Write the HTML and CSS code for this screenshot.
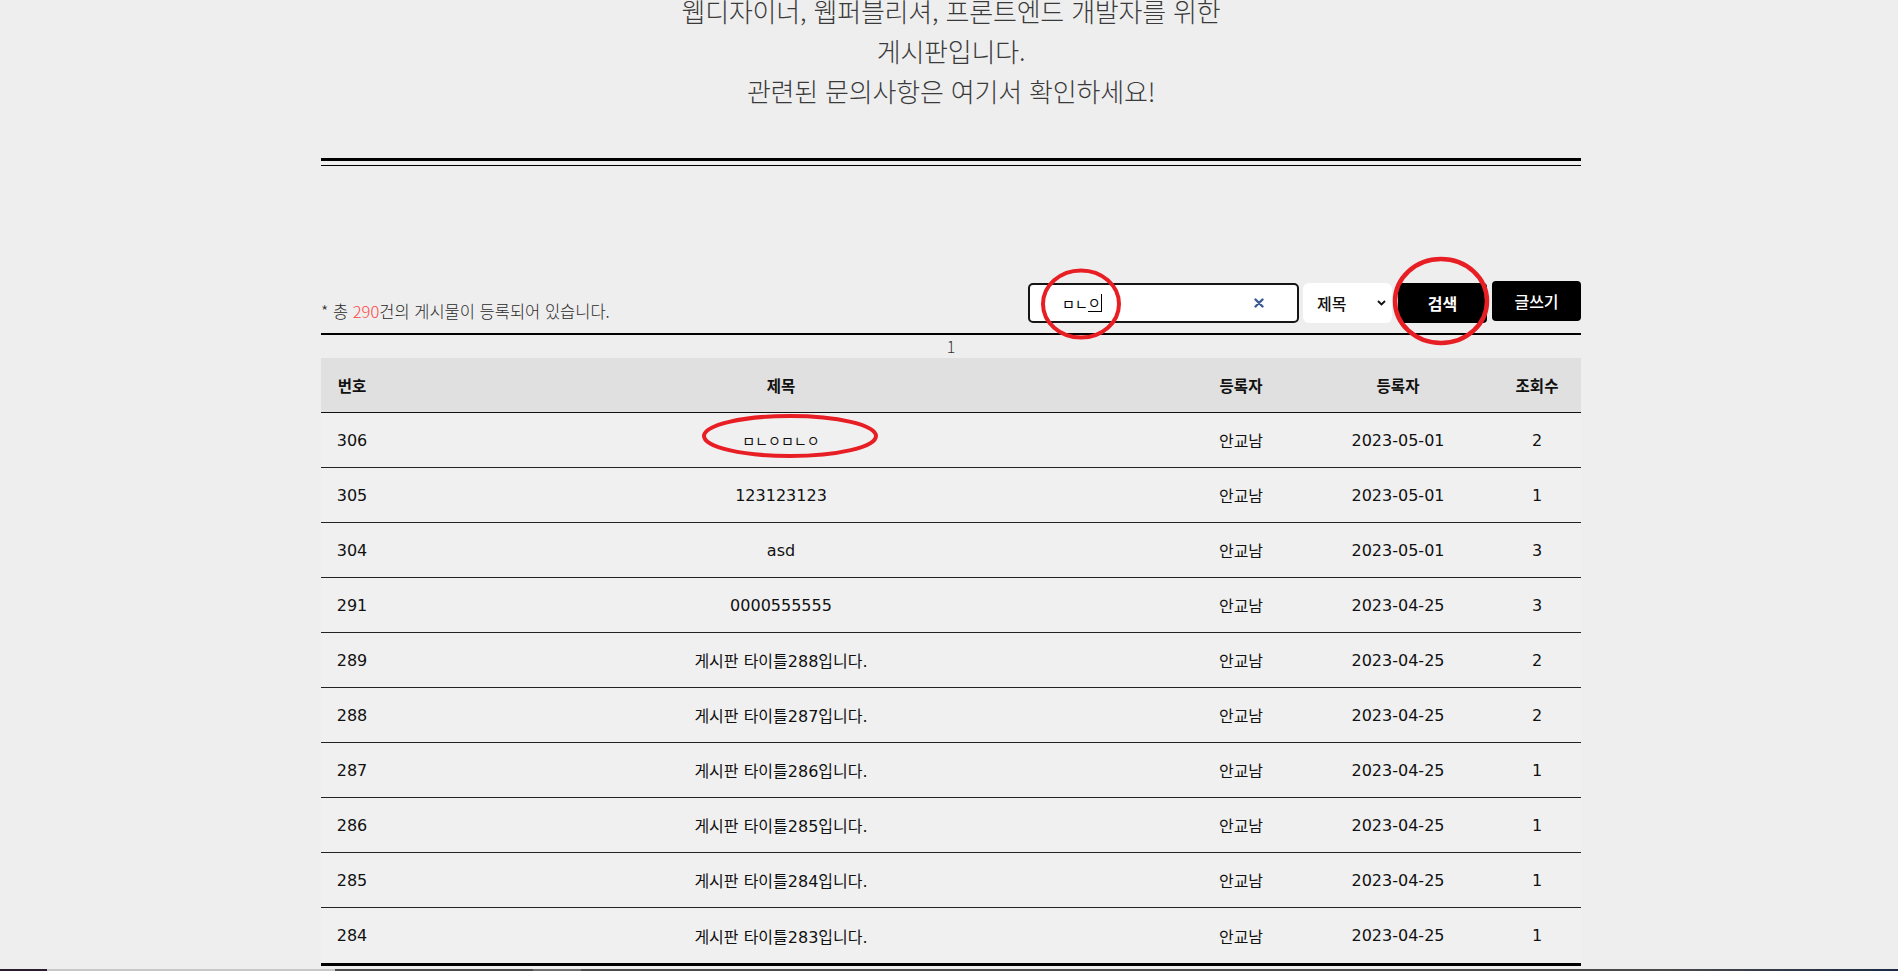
FILE: index.html
```html
<!DOCTYPE html>
<html lang="ko">
<head>
<meta charset="utf-8">
<title>게시판</title>
<link rel="stylesheet" href="styles.css">
</head>
<body>
<div class="page">
  <div class="intro">
    <p>웹디자이너, 웹퍼블리셔, 프론트엔드 개발자를 위한</p>
    <p>게시판입니다.</p>
    <p>관련된 문의사항은 여기서 확인하세요!</p>
  </div>

  <div class="board">
    <div class="rule"></div>

    <div class="toolbar">
      <p class="count">* 총 <span class="num">290</span>건의 게시물이 등록되어 있습니다.</p>
      <div class="controls">
        <div class="search">
          <span class="query">ㅁㄴ<span class="composing">ㅇ</span><span class="caret"></span></span>
          <svg class="clear" width="10" height="10" viewBox="0 0 10 10"><path d="M1.5 1.5 L8.5 8.5 M8.5 1.5 L1.5 8.5" stroke="#3c5b93" stroke-width="2.4" stroke-linecap="round"/></svg>
        </div>
        <div class="select">
          <span>제목</span>
          <svg width="9" height="6" viewBox="0 0 9 6"><path d="M1 1 L4.5 4.5 L8 1" fill="none" stroke="#111" stroke-width="1.8"/></svg>
        </div>
        <button class="btn btn-search">검색</button>
        <button class="btn btn-write">글쓰기</button>
      </div>
    </div>

    <div class="pager">1</div>

    <table class="list">
      <colgroup>
        <col class="c-no"><col class="c-title"><col class="c-writer"><col class="c-date"><col class="c-view">
      </colgroup>
      <thead>
        <tr><th>번호</th><th>제목</th><th>등록자</th><th>등록자</th><th>조회수</th></tr>
      </thead>
      <tbody>
        <tr><td>306</td><td class="jamo">ㅁㄴㅇㅁㄴㅇ</td><td>안교남</td><td>2023-05-01</td><td>2</td></tr>
        <tr><td>305</td><td>123123123</td><td>안교남</td><td>2023-05-01</td><td>1</td></tr>
        <tr><td>304</td><td>asd</td><td>안교남</td><td>2023-05-01</td><td>3</td></tr>
        <tr><td>291</td><td>0000555555</td><td>안교남</td><td>2023-04-25</td><td>3</td></tr>
        <tr><td>289</td><td>게시판 타이틀288입니다.</td><td>안교남</td><td>2023-04-25</td><td>2</td></tr>
        <tr><td>288</td><td>게시판 타이틀287입니다.</td><td>안교남</td><td>2023-04-25</td><td>2</td></tr>
        <tr><td>287</td><td>게시판 타이틀286입니다.</td><td>안교남</td><td>2023-04-25</td><td>1</td></tr>
        <tr><td>286</td><td>게시판 타이틀285입니다.</td><td>안교남</td><td>2023-04-25</td><td>1</td></tr>
        <tr><td>285</td><td>게시판 타이틀284입니다.</td><td>안교남</td><td>2023-04-25</td><td>1</td></tr>
        <tr class="last"><td>284</td><td>게시판 타이틀283입니다.</td><td>안교남</td><td>2023-04-25</td><td>1</td></tr>
      </tbody>
    </table>
  </div>
</div>

<svg class="annot" width="1898" height="971" viewBox="0 0 1898 971">
  <ellipse cx="1081" cy="304" rx="38" ry="33.5" fill="none" stroke="#e81e25" stroke-width="4"/>
  <ellipse cx="1441" cy="301" rx="46" ry="42" fill="none" stroke="#e81e25" stroke-width="4.5"/>
  <ellipse cx="790" cy="436" rx="86" ry="20" fill="none" stroke="#e81e25" stroke-width="4"/>
</svg>

<div class="taskbar"></div>
</body>
</html>
```

FILE: styles.css
```css
html, body {
  margin: 0;
  padding: 0;
  background: #eeeeee;
  overflow: hidden;
}

body {
  font-family: "Noto Sans CJK KR", "Noto Sans", sans-serif;
  color: #111;
}

.page {
  padding-left: 4px;
}

.intro {
  margin-top: -9px;
  text-align: center;
  font-size: 26px;
  font-weight: 300;
  line-height: 40px;
  color: #3a3a3a;
  letter-spacing: -0.2px;
}

.intro p {
  margin: 0;
}

.board {
  width: 1260px;
  margin: 47px auto 0;
}

.rule {
  height: 4px;
  border-top: 3px solid #000;
  border-bottom: 1px solid #000;
}

.toolbar {
  margin-top: 115px;
  display: flex;
  justify-content: space-between;
  align-items: flex-end;
  padding-bottom: 10px;
  border-bottom: 2px solid #000;
}

.count {
  margin: 0;
  font-size: 16.5px;
  line-height: 24px;
  color: #2a2a2a;
  font-weight: 300;
}

.count .num {
  color: #ff4545;
}

.controls {
  display: flex;
  align-items: flex-start;
}

.search {
  box-sizing: border-box;
  margin-top: 2px;
  width: 271px;
  height: 40px;
  background: #fff;
  border: 2px solid #151515;
  border-radius: 5px;
  display: flex;
  align-items: center;
  justify-content: space-between;
  padding: 0 33px 0 32px;
}

.query {
  font-size: 14px;
  line-height: 18px;
  color: #000;
  display: flex;
  align-items: center;
  letter-spacing: 0;
}

.composing {
  border-bottom: 1px solid #000;
  line-height: 17px;
}

.caret {
  display: inline-block;
  width: 1px;
  height: 18px;
  background: #000;
}

.clear {
  display: block;
}

.select {
  box-sizing: border-box;
  margin: 2px 0 0 4px;
  width: 89px;
  height: 40px;
  background: #fff;
  border-radius: 6px;
  display: flex;
  align-items: center;
  justify-content: space-between;
  padding: 0 6px 0 14px;
  font-size: 16px;
  font-weight: 500;
  color: #111;
}

.select svg {
  display: block;
}

.btn {
  box-sizing: border-box;
  height: 40px;
  width: 89px;
  background: #000;
  color: #fff;
  border: 0;
  border-radius: 4px;
  font-family: "Noto Sans CJK KR", sans-serif;
  font-size: 16px;
  padding: 0;
}

.btn-search {
  margin: 2px 0 0 6px;
  font-weight: 700;
}

.btn-write {
  margin-left: 5px;
  font-weight: 500;
}

.pager {
  height: 23px;
  line-height: 23px;
  text-align: center;
  font-size: 16px;
  font-weight: 300;
  color: #333;
}

.list {
  width: 1260px;
  border-collapse: separate;
  border-spacing: 0;
  table-layout: fixed;
  background: #f0f0f0;
  font-family: "DejaVu Sans", "Noto Sans CJK KR", sans-serif;
  font-size: 16px;
}

.c-no { width: 62px; }
.c-title { width: 796px; }
.c-writer { width: 124px; }
.c-date { width: 190px; }
.c-view { width: 88px; }

.list th {
  height: 54px;
  padding: 0;
  background: #e0e0e0;
  border-bottom: 1px solid #111;
  font-family: "Noto Sans CJK KR", sans-serif;
  font-weight: 700;
  font-size: 15.5px;
  color: #111;
  text-align: center;
}

.list td {
  height: 54px;
  padding: 0;
  border-bottom: 1px solid #222;
  text-align: center;
  color: #111;
  font-weight: 400;
}

.list td.jamo {
  font-family: "Noto Sans CJK KR", sans-serif;
  font-size: 14px;
}

.list tr.last td {
  height: 55px;
  border-bottom: 3px solid #000;
}

.annot {
  position: absolute;
  top: 0;
  left: 0;
  pointer-events: none;
}

.taskbar {
  position: fixed;
  left: 0;
  right: 0;
  bottom: 0;
  height: 2px;
  background: linear-gradient(to right,
    #2b1b2e 0, #2b1b2e 47px,
    #c8c8c8 47px, #c8c8c8 335px,
    #4a4a4a 335px, #4a4a4a 533px,
    #6e6e6e 533px, #6e6e6e 581px,
    #4a4a4a 581px, #4a4a4a 1658px,
    #1b2a44 1898px);
}
```
